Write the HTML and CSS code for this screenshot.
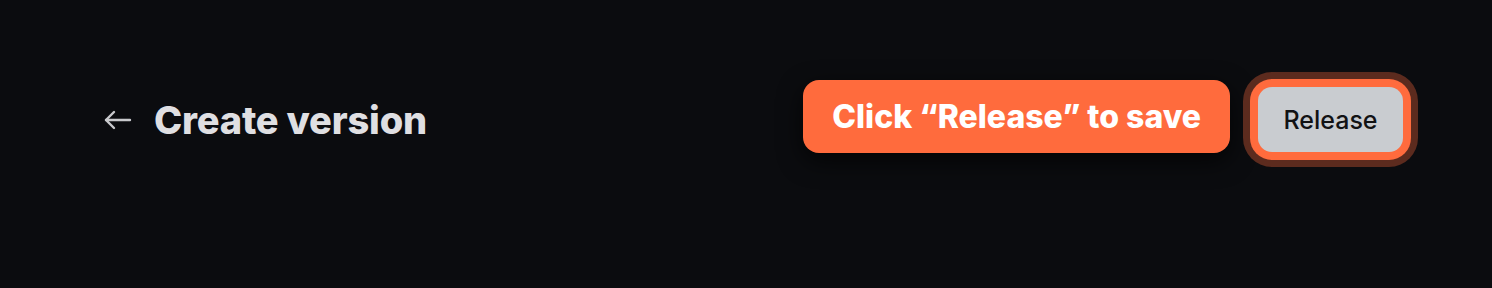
FILE: index.html
```html
<!DOCTYPE html>
<html lang="en">
<head>
    <meta charset="UTF-8">
    <meta name="viewport" content="width=device-width, initial-scale=1.0">
    <title>Create version</title>
    <link rel="stylesheet" href="styles.css">
</head>
<body>
    <header class="page-header">
        <div class="title-group">
            <button class="back-btn" aria-label="Back">
                <svg width="28" height="20" viewBox="0 0 28 20" fill="none" stroke="currentColor" stroke-width="2.4" stroke-linecap="round" stroke-linejoin="round">
                    <path d="M26 10H2"/>
                    <path d="M10 2L2 10l8 8"/>
                </svg>
            </button>
            <h1 class="page-title">Create version</h1>
        </div>
        <div class="actions">
            <div class="hint">Click “Release” to save</div>
            <button class="release-btn">Release</button>
        </div>
    </header>
</body>
</html>
```

FILE: styles.css
```css
body {
    margin: 0;
    background-color: #0b0c0f;
    font-family: Inter, "Noto Sans", sans-serif;
    height: 288px;
    overflow: hidden;
}
.page-header {
    display: flex;
    align-items: center;
    justify-content: space-between;
    height: 239px;
    padding: 0 89px 0 104px;
}
.title-group {
    display: flex;
    align-items: center;
    gap: 22px;
}
.back-btn {
    background: none;
    border: none;
    padding: 0;
    color: #c9cacd;
    display: flex;
    cursor: pointer;
}
.page-title {
    margin: 0;
    font-size: 38px;
    font-weight: 800;
    color: #dfdfe2;
    letter-spacing: -0.2px;
}
.actions {
    display: flex;
    align-items: center;
    gap: 28px;
}
.hint {
    background-color: #ff6b3d;
    color: #fff;
    font-size: 32px;
    font-weight: 800;
    height: 73px;
    padding: 0 29px;
    display: flex;
    align-items: center;
    border-radius: 16px;
    box-shadow: 0 8px 24px rgba(0, 0, 0, 0.7);
    margin-bottom: 6px;
}
.release-btn {
    width: 145px;
    height: 65px;
    background-color: #c9ccd0;
    color: #111214;
    border: none;
    border-radius: 14px;
    font-family: Inter, "Noto Sans", sans-serif;
    font-size: 25px;
    font-weight: 500;
    box-shadow: 0 0 0 8px #ff6b3d, 0 0 0 15px #5c2b1e;
    cursor: pointer;
}
```
